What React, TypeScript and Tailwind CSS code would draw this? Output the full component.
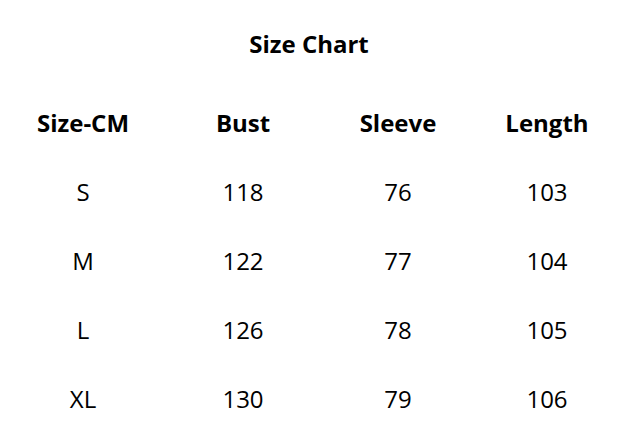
const headers = ["Size-CM", "Bust", "Sleeve", "Length"];

const rows = [
  ["S", "118", "76", "103"],
  ["M", "122", "77", "104"],
  ["L", "126", "78", "105"],
  ["XL", "130", "79", "106"],
];

const cols = "grid grid-cols-[166px_154px_156px_142px]";

export default function App() {
  return (
    <div className="h-[435px] w-[618px] bg-white text-black font-['Open_Sans',sans-serif]">
      <h1 className="flex h-[88px] items-center justify-center text-[24px] font-bold">Size Chart</h1>
      <div className={cols}>
        {headers.map((h) => (
          <div key={h} className="flex h-[69px] items-center justify-center text-[24px] font-bold">
            {h}
          </div>
        ))}
      </div>
      {rows.map((r) => (
        <div key={r[0]} className={cols}>
          {r.map((c, i) => (
            <div key={i} className="flex h-[69px] items-center justify-center text-[24px]">
              {c}
            </div>
          ))}
        </div>
      ))}
    </div>
  );
}
